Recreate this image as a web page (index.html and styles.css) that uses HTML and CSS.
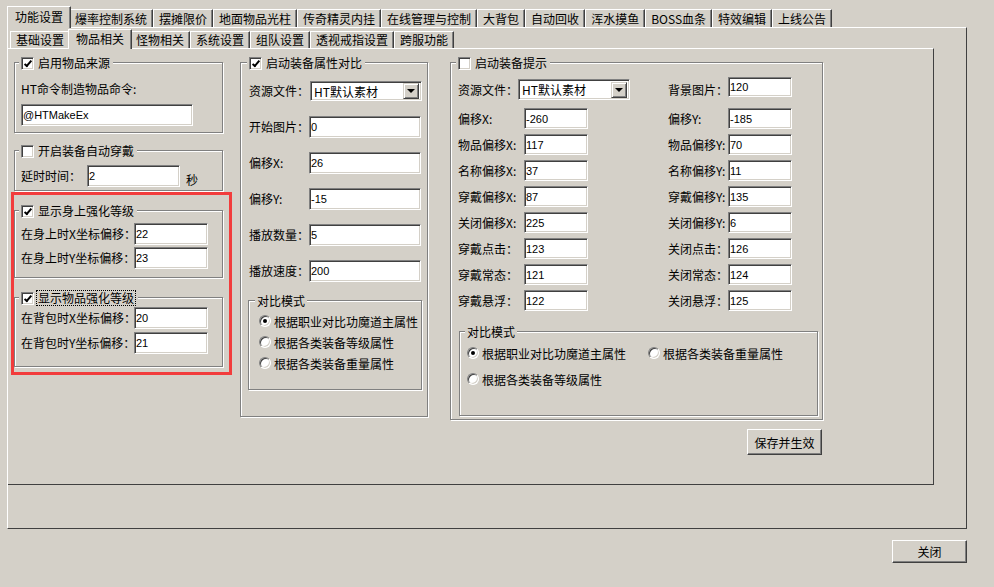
FILE: index.html
```html
<!DOCTYPE html>
<html lang="zh-CN">
<head>
    <meta charset="UTF-8">
    <title>功能设置</title>
    <link rel="stylesheet" href="styles.css">
</head>
<body>
    <div class="window">
        <div class="tabs outer-tabs">
            <div class="tab active">功能设置</div>
            <div class="tab">爆率控制系统</div>
            <div class="tab">摆摊限价</div>
            <div class="tab">地面物品光柱</div>
            <div class="tab">传奇精灵内挂</div>
            <div class="tab">在线管理与控制</div>
            <div class="tab">大背包</div>
            <div class="tab">自动回收</div>
            <div class="tab">浑水摸鱼</div>
            <div class="tab">BOSS血条</div>
            <div class="tab">特效编辑</div>
            <div class="tab">上线公告</div>
        </div>
        <div class="outer-panel">
            <div class="tabs inner-tabs">
                <div class="tab">基础设置</div>
                <div class="tab active">物品相关</div>
                <div class="tab">怪物相关</div>
                <div class="tab">系统设置</div>
                <div class="tab">组队设置</div>
                <div class="tab">透视戒指设置</div>
                <div class="tab">跨服功能</div>
            </div>
            <div class="inner-panel">
                <!-- left column -->
                <div class="col col-left">
                    <div class="group g-source">
                        <div class="group-title"><span class="check on"></span>启用物品来源</div>
                        <div class="label cmd-label">HT命令制造物品命令:</div>
                        <input class="edit edit-cmd" type="text" value="@HTMakeEx">
                    </div>
                    <div class="group g-wear">
                        <div class="group-title"><span class="check"></span>开启装备自动穿戴</div>
                        <div class="row delay-row">
                            <span class="label w-delay">延时时间：</span>
                            <input class="edit edit-delay" type="text" value="2">
                            <span class="unit">秒</span>
                        </div>
                    </div>
                    <div class="highlight">
                        <div class="group g-body">
                            <div class="group-title"><span class="check on"></span>显示身上强化等级</div>
                            <div class="row first-row">
                                <span class="label w-offset">在身上时X坐标偏移：</span>
                                <input class="edit edit-offset" type="text" value="22">
                            </div>
                            <div class="row next-row">
                                <span class="label w-offset">在身上时Y坐标偏移：</span>
                                <input class="edit edit-offset" type="text" value="23">
                            </div>
                        </div>
                        <div class="group g-bag">
                            <div class="group-title"><span class="check on"></span><span class="focus">显示物品强化等级</span></div>
                            <div class="row first-row">
                                <span class="label w-offset">在背包时X坐标偏移：</span>
                                <input class="edit edit-offset" type="text" value="20">
                            </div>
                            <div class="row next-row">
                                <span class="label w-offset">在背包时Y坐标偏移：</span>
                                <input class="edit edit-offset" type="text" value="21">
                            </div>
                        </div>
                    </div>
                </div>

                <!-- middle column -->
                <div class="col col-mid">
                    <div class="group g-compare">
                        <div class="group-title"><span class="check on"></span>启动装备属性对比</div>
                        <div class="field-list">
                            <div class="row field-row">
                                <span class="label w-field">资源文件：</span>
                                <div class="combo combo-mid"><span>HT默认素材</span><span class="combo-btn"></span></div>
                            </div>
                            <div class="row field-row">
                                <span class="label w-field">开始图片：</span>
                                <input class="edit edit-field" type="text" value="0">
                            </div>
                            <div class="row field-row">
                                <span class="label w-field">偏移X:</span>
                                <input class="edit edit-field" type="text" value="26">
                            </div>
                            <div class="row field-row">
                                <span class="label w-field">偏移Y:</span>
                                <input class="edit edit-field" type="text" value="-15">
                            </div>
                            <div class="row field-row">
                                <span class="label w-field">播放数量：</span>
                                <input class="edit edit-field" type="text" value="5">
                            </div>
                            <div class="row field-row">
                                <span class="label w-field">播放速度：</span>
                                <input class="edit edit-field" type="text" value="200">
                            </div>
                        </div>
                        <div class="group sub-group sub-mid">
                            <div class="sub-title">对比模式</div>
                            <div class="radio-item"><span class="radio on"></span>根据职业对比功魔道主属性</div>
                            <div class="radio-item"><span class="radio"></span>根据各类装备等级属性</div>
                            <div class="radio-item"><span class="radio"></span>根据各类装备重量属性</div>
                        </div>
                    </div>
                </div>

                <!-- right column -->
                <div class="col col-right">
                    <div class="group g-tip">
                        <div class="group-title"><span class="check"></span>启动装备提示</div>
                        <div class="tip-grid">
                            <span class="label">资源文件：</span>
                            <div class="combo combo-tip"><span>HT默认素材</span><span class="combo-btn"></span></div>
                            <span class="label rl">背景图片：</span>
                            <input class="edit edit-tip edit-bg" type="text" value="120">

                            <span class="label">偏移X:</span>
                            <input class="edit edit-tip" type="text" value="-260">
                            <span class="label rl">偏移Y:</span>
                            <input class="edit edit-tip" type="text" value="-185">

                            <span class="label">物品偏移X:</span>
                            <input class="edit edit-tip" type="text" value="117">
                            <span class="label rl">物品偏移Y:</span>
                            <input class="edit edit-tip" type="text" value="70">

                            <span class="label">名称偏移X:</span>
                            <input class="edit edit-tip" type="text" value="37">
                            <span class="label rl">名称偏移Y:</span>
                            <input class="edit edit-tip" type="text" value="11">

                            <span class="label">穿戴偏移X:</span>
                            <input class="edit edit-tip" type="text" value="87">
                            <span class="label rl">穿戴偏移Y:</span>
                            <input class="edit edit-tip" type="text" value="135">

                            <span class="label">关闭偏移X:</span>
                            <input class="edit edit-tip" type="text" value="225">
                            <span class="label rl">关闭偏移Y:</span>
                            <input class="edit edit-tip" type="text" value="6">

                            <span class="label">穿戴点击：</span>
                            <input class="edit edit-tip" type="text" value="123">
                            <span class="label rl">关闭点击：</span>
                            <input class="edit edit-tip" type="text" value="126">

                            <span class="label">穿戴常态：</span>
                            <input class="edit edit-tip" type="text" value="121">
                            <span class="label rl">关闭常态：</span>
                            <input class="edit edit-tip" type="text" value="124">

                            <span class="label">穿戴悬浮：</span>
                            <input class="edit edit-tip" type="text" value="122">
                            <span class="label rl">关闭悬浮：</span>
                            <input class="edit edit-tip" type="text" value="125">
                        </div>
                        <div class="group sub-group sub-tip">
                            <div class="sub-title">对比模式</div>
                            <div class="radio-row">
                                <div class="radio-item wide"><span class="radio on"></span>根据职业对比功魔道主属性</div>
                                <div class="radio-item"><span class="radio"></span>根据各类装备重量属性</div>
                            </div>
                            <div class="radio-row second">
                                <div class="radio-item"><span class="radio"></span>根据各类装备等级属性</div>
                            </div>
                        </div>
                    </div>
                    <button class="btn btn-save">保存并生效</button>
                </div>
            </div>
        </div>
        <button class="btn btn-close">关闭</button>
    </div>
</body>
</html>
```

FILE: styles.css
```css
body {
    margin: 0;
    background-color: #d4d0c8;
    font-family: "Noto Sans CJK SC", "Liberation Sans", sans-serif;
    font-size: 12px;
    color: #000;
}
.window {
    width: 960px;
    padding: 6px 0 0 7px;
    display: flex;
    flex-direction: column;
}

/* controls */
.edit {
    box-sizing: border-box;
    height: 22px;
    margin: 0;
    padding: 0 1px;
    border: 1px solid;
    border-color: #808080 #fff #fff #808080;
    box-shadow: inset 1px 1px 0 #404040, inset -1px -1px 0 #d4d0c8;
    background-color: #fff;
    font-family: "Liberation Sans", sans-serif;
    font-size: 11px;
    color: #000;
    outline: none;
}
.combo {
    box-sizing: border-box;
    display: flex;
    align-items: center;
    justify-content: space-between;
    width: 112px;
    height: 20px;
    padding: 0 2px 0 3px;
    border: 1px solid;
    border-color: #808080 #fff #fff #808080;
    box-shadow: inset 1px 1px 0 #404040, inset -1px -1px 0 #d4d0c8;
    background-color: #fff;
    white-space: nowrap;
}
.combo-btn {
    box-sizing: border-box;
    width: 16px;
    height: 16px;
    border: 1px solid;
    border-color: #d4d0c8 #404040 #404040 #d4d0c8;
    box-shadow: inset 1px 1px 0 #fff, inset -1px -1px 0 #808080;
    background-color: #d4d0c8;
    display: flex;
    align-items: center;
    justify-content: center;
}
.combo-btn::after {
    content: "";
    border-left: 4px solid transparent;
    border-right: 4px solid transparent;
    border-top: 4px solid #000;
}
.check {
    box-sizing: border-box;
    position: relative;
    flex: none;
    width: 13px;
    height: 13px;
    border: 1px solid;
    border-color: #808080 #fff #fff #808080;
    box-shadow: inset 1px 1px 0 #404040, inset -1px -1px 0 #d4d0c8;
    background-color: #fff;
}
.check.on::after {
    content: "";
    position: absolute;
    left: 4px;
    top: 1px;
    width: 2px;
    height: 6px;
    border: solid #000;
    border-width: 0 2px 2px 0;
    transform: rotate(40deg);
}
.radio-item {
    display: flex;
    align-items: center;
    gap: 3px;
    height: 16px;
    white-space: nowrap;
}
.radio {
    box-sizing: border-box;
    flex: none;
    width: 12px;
    height: 12px;
    border-radius: 50%;
    border: 1px solid;
    border-color: #808080 #fff #fff #808080;
    box-shadow: inset 1px 1px 0 #404040, inset -1px -1px 0 #d4d0c8;
    background-color: #fff;
    display: flex;
    align-items: center;
    justify-content: center;
}
.radio.on::after {
    content: "";
    width: 4px;
    height: 4px;
    border-radius: 50%;
    background-color: #000;
}
.btn {
    box-sizing: border-box;
    width: 75px;
    padding: 0;
    border: 1px solid;
    border-color: #fff #404040 #404040 #fff;
    box-shadow: inset -1px -1px 0 #808080;
    background-color: #d4d0c8;
    font: inherit;
    color: #000;
}

/* tabs */
.tabs {
    display: flex;
    align-items: flex-end;
    padding-left: 2px;
    position: relative;
    z-index: 1;
}
.outer-tabs {
    height: 21px;
}
.inner-tabs {
    height: 20px;
}
.tab {
    box-sizing: border-box;
    padding: 0 5px;
    border-top: 1px solid #fff;
    border-left: 1px solid #fff;
    border-right: 1px solid #404040;
    box-shadow: inset -1px 0 0 #808080;
    background-color: #d4d0c8;
    white-space: nowrap;
}
.outer-tabs .tab {
    height: 18px;
    line-height: 17px;
}
.inner-tabs .tab {
    height: 17px;
    line-height: 16px;
}
.tab.active {
    position: relative;
    margin: 0 -2px -1px;
    padding: 0 7px;
}
.outer-tabs .tab.active {
    height: 22px;
    line-height: 20px;
}
.inner-tabs .tab.active {
    height: 20px;
    line-height: 17px;
}

/* panels */
.outer-panel {
    box-sizing: border-box;
    height: 502px;
    border: 1px solid #404040;
    border-top-color: #fff;
    border-left-color: #fff;
}
.inner-panel {
    box-sizing: border-box;
    width: 926px;
    height: 437px;
    border: 1px solid #404040;
    border-top-color: #fff;
    border-left: none;
    padding: 13px 0 0 6px;
    display: flex;
    align-items: flex-start;
}
.col {
    display: flex;
    flex-direction: column;
}
.col-left {
    width: 209px;
}
.col-mid {
    width: 188px;
    margin-left: 17px;
}
.col-right {
    width: 373px;
    margin-left: 22px;
}

/* group boxes */
.group {
    box-sizing: border-box;
    border: 1px solid #808080;
    box-shadow: 1px 1px 0 #fff, inset 1px 1px 0 #fff;
    padding: 0 6px;
    display: flex;
    flex-direction: column;
    align-items: flex-start;
}
.group-title {
    display: flex;
    align-items: center;
    gap: 4px;
    height: 14px;
    line-height: 14px;
    margin: -7px 0 0 -2px;
    padding: 0 3px 0 2px;
    background-color: #d4d0c8;
}
.sub-title {
    height: 14px;
    line-height: 14px;
    margin: -7px 0 0 -4px;
    padding: 0 2px;
    background-color: #d4d0c8;
}
.focus {
    outline: 1px dotted #000;
    padding: 0 1px;
    margin-left: -1px;
}
.row {
    display: flex;
    align-items: center;
}
.label {
    white-space: nowrap;
    line-height: 14px;
}

/* left column */
.g-source {
    padding-bottom: 6px;
}
.cmd-label {
    margin-top: 12px;
}
.edit-cmd {
    width: 172px;
    margin-top: 8px;
}
.g-wear {
    margin-top: 17px;
    padding-bottom: 3px;
}
.delay-row {
    margin-top: 7px;
}
.w-delay {
    width: 66px;
}
.edit-delay {
    width: 93px;
}
.unit {
    align-self: flex-end;
    line-height: 14px;
    margin-left: 6px;
}
.highlight {
    position: relative;
    margin-top: 19px;
}
.highlight::after {
    content: "";
    position: absolute;
    top: -18px;
    left: -3px;
    right: -9px;
    bottom: -8px;
    border: 3px solid #f23c3c;
    pointer-events: none;
}
.g-body {
    padding-bottom: 8px;
}
.g-bag {
    margin-top: 19px;
    padding-bottom: 12px;
}
.g-body .first-row {
    margin-top: 5px;
}
.g-body .next-row {
    margin-top: 2px;
}
.g-bag .first-row {
    margin-top: 2px;
}
.g-bag .next-row {
    margin-top: 3px;
}
.w-offset {
    width: 113px;
}
.edit-offset {
    width: 74px;
}

/* middle column */
.g-compare {
    padding: 0 6px 26px 8px;
}
.field-list {
    display: flex;
    flex-direction: column;
    gap: 14px;
    margin-top: 10px;
}
.field-row {
    height: 22px;
}
.w-field {
    width: 60px;
}
.edit-field {
    width: 112px;
}
.combo-mid {
    margin-left: 1px;
}
.sub-mid {
    width: 174px;
    margin: 18px 0 0 -1px;
    padding: 0 6px 18px 10px;
}
.sub-mid .radio-item {
    margin-top: 5px;
}

/* right column */
.g-tip {
    padding: 0 6px 3px 7px;
}
.tip-grid {
    display: grid;
    grid-template-columns: 66px 64px 80px 60px 64px;
    grid-template-rows: 26px repeat(8, 21px);
    row-gap: 5px;
    align-items: center;
    margin-top: 7px;
}
.rl {
    grid-column: 4;
}
.edit-tip {
    width: 64px;
    height: 21px;
}
.edit-bg {
    align-self: start;
    height: 20px;
}
.combo-tip {
    grid-column: 2 / span 2;
    align-self: start;
    margin: 2px 0 0 -6px;
    height: 21px;
}
.sub-tip {
    width: 359px;
    margin: 20px 0 0 1px;
    padding: 0 6px 28px 7px;
}
.sub-tip .sub-title {
    margin-left: -2px;
}
.radio-row {
    display: flex;
    margin-top: 6px;
}
.radio-row.second {
    margin-top: 10px;
}
.radio-item.wide {
    width: 181px;
}
.btn-save {
    align-self: flex-end;
    height: 26px;
    margin: 9px 1px 0 0;
}
.btn-close {
    align-self: flex-end;
    height: 23px;
    margin-top: 11px;
}
```
